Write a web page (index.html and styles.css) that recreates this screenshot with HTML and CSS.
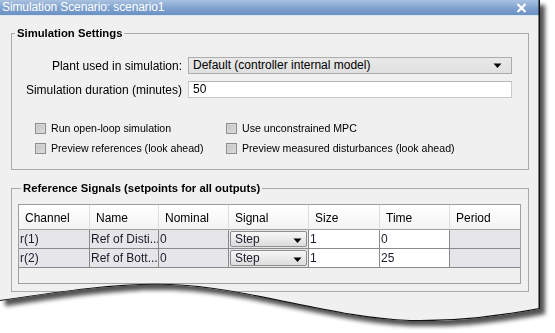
FILE: index.html
```html
<!DOCTYPE html>
<html>
<head>
<meta charset="utf-8">
<link rel="stylesheet" href="styles.css">
</head>
<body>
<div class="frame">
  <div class="window">
    <div class="titlebar">
      <span class="title">Simulation Scenario: scenario1</span>
      <svg class="close" width="11" height="10" viewBox="0 0 11 10"><path d="M1.5 1 L9.5 9 M9.5 1 L1.5 9" stroke="#fff" stroke-width="2.2" fill="none"/></svg>
    </div>
    <div class="content">
      <fieldset class="group settings">
        <legend class="group-title">Simulation Settings</legend>
        <div class="field-row">
          <span class="field-label">Plant used in simulation:</span>
          <div class="combo">Default (controller internal model)
            <svg class="combo-arrow" width="9" height="6" viewBox="0 0 9 6"><path d="M0.5 0.5 H8.5 L4.5 5 Z" fill="#000"/></svg>
          </div>
        </div>
        <div class="field-row">
          <span class="field-label">Simulation duration (minutes)</span>
          <div class="textfield">50</div>
        </div>
        <div class="checks">
          <div class="check"><span class="box"></span>Run open-loop simulation</div>
          <div class="check"><span class="box"></span>Use unconstrained MPC</div>
          <div class="check"><span class="box"></span>Preview references (look ahead)</div>
          <div class="check"><span class="box"></span>Preview measured disturbances (look ahead)</div>
        </div>
      </fieldset>
      <fieldset class="group signals">
        <legend class="group-title">Reference Signals (setpoints for all outputs)</legend>
        <div class="table">
          <div class="th">Channel</div>
          <div class="th">Name</div>
          <div class="th">Nominal</div>
          <div class="th">Signal</div>
          <div class="th">Size</div>
          <div class="th">Time</div>
          <div class="th last">Period</div>

          <div class="td ro">r(1)</div>
          <div class="td ro">Ref of Disti...</div>
          <div class="td ro">0</div>
          <div class="td sig"><div class="cell-combo">Step<svg class="cell-arrow" width="9" height="6" viewBox="0 0 9 6"><path d="M0.5 0.5 H8.5 L4.5 5 Z" fill="#000"/></svg></div></div>
          <div class="td ed">1</div>
          <div class="td ed">0</div>
          <div class="td ro last"></div>

          <div class="td ro">r(2)</div>
          <div class="td ro">Ref of Bott...</div>
          <div class="td ro">0</div>
          <div class="td sig"><div class="cell-combo">Step<svg class="cell-arrow" width="9" height="6" viewBox="0 0 9 6"><path d="M0.5 0.5 H8.5 L4.5 5 Z" fill="#000"/></svg></div></div>
          <div class="td ed">1</div>
          <div class="td ed">25</div>
          <div class="td ro last"></div>

          <div class="filler"></div>
        </div>
      </fieldset>
    </div>
    <svg class="edge" width="540" height="326" viewBox="0 0 540 326">
      <path d="M539.5 0 V309 C 500 316, 460 322, 410 321 C 330 318, 250 288, 170 285 C 120 283, 60 292, 0 301" stroke="#111" stroke-width="2" fill="none"/>
    </svg>
  </div>
</div>
</body>
</html>
```

FILE: styles.css
```css
html, body {
  margin: 0;
  padding: 0;
  background: #ffffff;
}

body {
  width: 555px;
  height: 333px;
  overflow: hidden;
  font-family: "Liberation Sans", Arial, sans-serif;
  font-size: 12px;
  color: #000;
}

.frame {
  width: 540px;
  height: 326px;
  filter: drop-shadow(5px 5px 2px rgba(0, 0, 0, 0.68));
}

.window {
  position: relative;
  width: 540px;
  height: 326px;
  background: #f0f0f0;
  clip-path: path("M0 0 H540 V309 C 500 316, 460 322, 410 321 C 330 318, 250 288, 170 285 C 120 283, 60 292, 0 301 Z");
}

.edge {
  position: absolute;
  left: 0;
  top: 0;
}

.titlebar {
  height: 15px;
  border-bottom: 1px solid #dfe7f1;
  background: linear-gradient(#a8c1e0, #7c9fcd 60%, #6a91c4);
  display: flex;
  align-items: center;
  justify-content: space-between;
  padding: 0 13px 0 2px;
}

.title {
  color: #fff;
  font-size: 12px;
  line-height: 15px;
  letter-spacing: -0.1px;
}

.close {
  display: block;
}

.content {
  padding: 0 11px 0 11px;
  display: flex;
  flex-direction: column;
}

.group {
  margin: 0;
  padding: 0;
  border: 1px solid #a9a9a9;
  min-width: 0;
  width: 518px;
  box-sizing: border-box;
}

.settings {
  margin-top: 10px;
  padding: 0 0 11px 0;
}

.signals {
  margin-top: 11px;
  padding: 0 0 7px 6px;
}

.group-title {
  margin-left: 3px;
  padding: 0 2px;
  font-weight: bold;
  font-size: 11.3px;
  line-height: 14px;
}

.field-row {
  display: flex;
  align-items: center;
  height: 17px;
  margin-top: 7px;
}

.settings .field-row:first-of-type {
  margin-top: 17px;
}

.field-label {
  width: 170px;
  margin-right: 6px;
  text-align: right;
  white-space: nowrap;
}

.combo {
  position: relative;
  width: 324px;
  height: 17px;
  box-sizing: border-box;
  border: 1px solid #acacac;
  background: linear-gradient(#e9e9e9, #e0e0e0);
  padding-left: 4px;
  line-height: 15px;
  display: flex;
  align-items: center;
  justify-content: space-between;
  padding-right: 9px;
}

.combo-arrow {
  display: block;
}

.textfield {
  width: 324px;
  height: 17px;
  box-sizing: border-box;
  border: 1px solid #c9c9c9;
  border-top-color: #b5b5b5;
  background: #fff;
  padding-left: 4px;
  line-height: 15px;
}

.checks {
  margin-top: 20px;
  padding-left: 23px;
  display: grid;
  grid-template-columns: 191px auto;
  grid-auto-rows: 20px;
  font-size: 10.6px;
}

.check {
  display: flex;
  align-items: center;
  white-space: nowrap;
}

.box {
  width: 11px;
  height: 11px;
  box-sizing: border-box;
  border: 1px solid #8e8e8e;
  background: linear-gradient(135deg, #c4c4c4, #dcdcdc);
  box-shadow: inset 0 0 0 1px #d6d6d6;
  margin-right: 5px;
  flex: none;
}

.table {
  margin-top: 9px;
  width: 503px;
  box-sizing: border-box;
  border: 1px solid #9e9e9e;
  display: grid;
  grid-template-columns: 71px 69px 70px 80px 71px 70px 70px;
  grid-template-rows: 25px 19px 19px 15px;
  background: #f0f0f0;
}

.th {
  background: linear-gradient(#ffffff, #f3f3f3);
  border-right: 1px solid #dedede;
  border-bottom: 1px solid #a0a0a0;
  padding-left: 6px;
  display: flex;
  align-items: center;
  padding-top: 1px;
}

.th.last {
  border-right: none;
}

.td {
  border-right: 1px solid #8a8a8a;
  border-bottom: 1px solid #8a8a8a;
  padding-left: 1px;
  line-height: 18px;
  white-space: nowrap;
  overflow: hidden;
  color: #1b1b2b;
}

.td.last {
  border-right: none;
}

.ro {
  background: #e6e6ea;
}

.ed {
  background: #ffffff;
}

.sig {
  background: #e6e6ea;
  padding: 1px 1px 1px 1px;
}

.cell-combo {
  height: 16px;
  box-sizing: border-box;
  border: 1px solid #8f8f8f;
  border-radius: 2px;
  background: linear-gradient(#f7f7f7, #dcdcdc);
  display: flex;
  align-items: center;
  justify-content: space-between;
  padding: 0 4px 0 4px;
  line-height: 14px;
}

.cell-arrow {
  display: block;
  margin-top: 4px;
}

.filler {
  grid-column: 1 / -1;
  background: #f0f0f0;
}
```
